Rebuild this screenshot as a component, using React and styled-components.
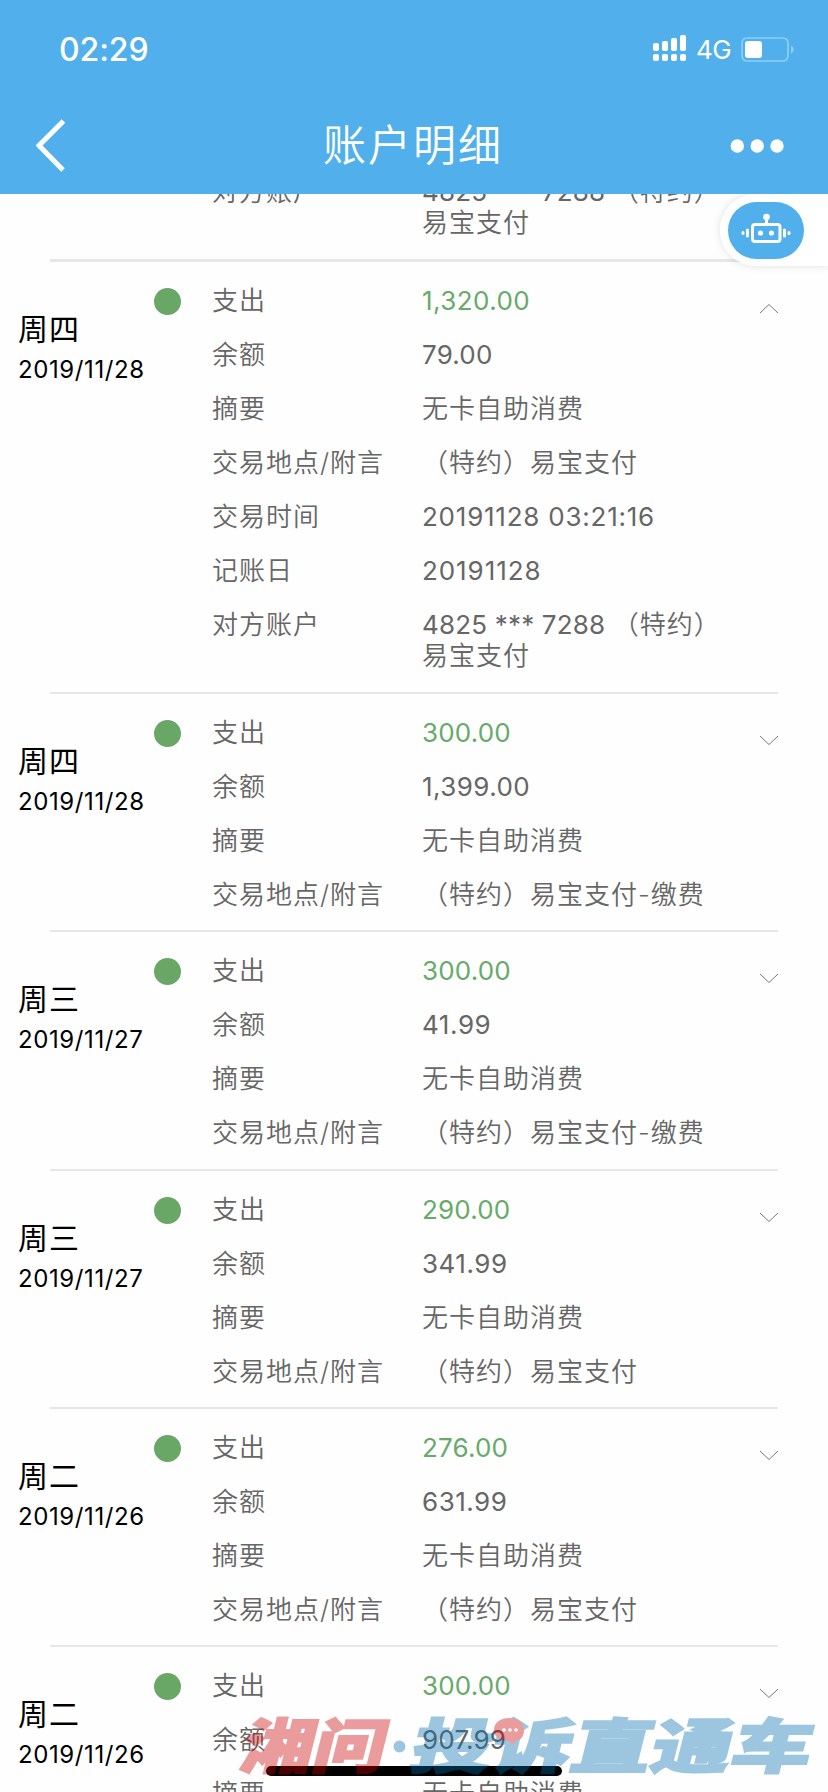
import React from 'react';
import styled, { createGlobalStyle } from 'styled-components';

const Global = createGlobalStyle`
  * { box-sizing: border-box; }
  body { margin: 0; background: #fefefe; overflow: hidden; }
`;

const Screen = styled.div`
  position: relative;
  width: 828px;
  height: 1792px;
  overflow: hidden;
  display: flex;
  flex-direction: column;
  background: #fefefe;
  font-family: Inter, 'Noto Sans CJK SC', sans-serif;
`;

const Header = styled.header`
  height: 194px;
  flex: none;
  background: #51b0ec;
  color: #fff;
`;

const StatusBar = styled.div`
  height: 100px;
  padding: 0 34px 0 59px;
  display: flex;
  align-items: center;
  justify-content: space-between;
`;

const Clock = styled.div`
  font-size: 32px;
  font-weight: 500;
  letter-spacing: -0.1px;
  line-height: 40px;
`;

const StatusIcons = styled.div`
  display: flex;
  align-items: center;
`;

const SignalIcon = styled.svg`
  margin-bottom: 3px;
`;

const Network = styled.span`
  width: 35px;
  margin: 0 10px 0 9px;
  font-size: 26px;
  line-height: 30px;
  letter-spacing: -0.5px;
  white-space: nowrap;
`;

const NavBar = styled.div`
  height: 92px;
  padding: 0 44px 0 36px;
  display: grid;
  grid-template-columns: 54px 1fr 54px;
  align-items: center;
`;

const Title = styled.h1`
  margin: 0;
  padding: 0 0 8px 6px;
  text-align: center;
  font-family: 'Noto Sans CJK SC', sans-serif;
  font-size: 43px;
  font-weight: 350;
  line-height: 60px;
  letter-spacing: 2px;
`;

const List = styled.main`
  flex: 1;
  min-height: 0;
  overflow: hidden;
`;

const Entry = styled.section`
  height: ${(p) => p.$height}px;
  margin-top: ${(p) => p.$shift || 0}px;
  display: grid;
  grid-template-columns: 154px 58px 1fr 50px;
  align-items: start;
`;

const Rule = styled.hr`
  margin: 0 50px;
  border: 0;
  height: ${(p) => p.$thick || 2}px;
  background: #e7e7e7;
`;

const DateCell = styled.div`
  padding: 47px 0 0 18px;
  color: #000;
  white-space: nowrap;
`;

const Weekday = styled.div`
  font-size: 30px;
  line-height: 40px;
  letter-spacing: 1px;
`;

const DateText = styled.div`
  font-size: 24px;
  line-height: 41px;
  letter-spacing: 0.6px;
`;

const Dot = styled.i`
  width: 27px;
  height: 27px;
  margin-top: 26px;
  border-radius: 50%;
  background: #69a767;
`;

const Rows = styled.dl`
  margin: 0;
  padding-top: 23px;
  display: flex;
  flex-direction: column;
  gap: 23px;
`;

const Row = styled.div`
  display: grid;
  grid-template-columns: 210px 1fr;
  font-size: 26px;
  line-height: 31px;
  letter-spacing: 1px;
  color: #666;
`;

const Label = styled.dt`
  font-weight: 350;
  white-space: nowrap;
`;

const Value = styled.dd`
  margin: 0;
  width: 300px;
  color: ${(p) => (p.$amount ? '#67aa69' : 'inherit')};
`;

const Line = styled.div`
  white-space: pre;
  font-weight: 350;
`;

const Digits = styled.span`
  font-weight: 400;
  letter-spacing: ${(p) => p.$tracking}px;
`;

const Toggle = styled.svg`
  margin: 42px 0 0 -18px;
  overflow: visible;
`;

const Assistant = styled.button`
  position: absolute;
  top: 194px;
  right: 0;
  width: 108px;
  height: 72px;
  padding: 0 0 0 8px;
  border: 0;
  border-radius: 36px 0 0 36px;
  background: rgba(255, 255, 255, 0.85);
  box-shadow: 0 0 8px rgba(0, 0, 0, 0.12);
  clip-path: inset(0 0 -12px -12px);
  display: flex;
  align-items: center;
`;

const Bubble = styled.span`
  width: 76px;
  height: 57px;
  border-radius: 28.5px;
  background: #51b0ec;
`;

const HomeBar = styled.div`
  position: absolute;
  left: 266px;
  top: 1766px;
  width: 296px;
  height: 10px;
  border-radius: 5px;
  background: #000;
`;

const Watermark = styled.svg`
  position: absolute;
  left: 0;
  bottom: 0;
  pointer-events: none;
`;

const MarkText = styled.text`
  font-family: 'Noto Sans CJK SC', sans-serif;
  font-size: 59px;
  font-weight: 900;
`;

const place = '交易地点/附言';
const detail = (amount, balance, where) => [
  ['支出', amount],
  ['余额', balance],
  ['摘要', '无卡自助消费'],
  [place, where],
];
const account = ['对方账户', '4825 *** 7288 （特约）', '易宝支付'];

const entries = [
  {
    day: '周四', date: '2019/11/28', height: 430, open: true,
    rows: [
      ...detail('1,320.00', '79.00', '（特约）易宝支付'),
      ['交易时间', '20191128 03:21:16'],
      ['记账日', '20191128'],
      account,
    ],
  },
  { day: '周四', date: '2019/11/28', height: 236, rows: detail('300.00', '1,399.00', '（特约）易宝支付-缴费') },
  { day: '周三', date: '2019/11/27', height: 236.5, rows: detail('300.00', '41.99', '（特约）易宝支付-缴费') },
  { day: '周三', date: '2019/11/27', height: 236, rows: detail('290.00', '341.99', '（特约）易宝支付') },
  { day: '周二', date: '2019/11/26', height: 236.5, rows: detail('276.00', '631.99', '（特约）易宝支付') },
  { day: '周二', date: '2019/11/26', height: 236, rows: detail('300.00', '907.99', '（特约）易宝支付') },
];

// The figure 1 is narrow in Inter, so runs with many of them get wider tracking.
const trackingOf = (run) => 0.18 + (2 * (run.split('1').length - 1)) / run.length;

function ValueLine({ text }) {
  const [, digits, rest] = text.match(/^([\d.,:* ]*)(.*)$/);
  return (
    <Line>
      {digits && <Digits $tracking={trackingOf(digits)}>{digits}</Digits>}
      {rest}
    </Line>
  );
}

function Detail({ row, amount }) {
  const [label, ...lines] = row;
  return (
    <Row>
      <Label>{label}</Label>
      <Value $amount={amount}>{lines.map((l) => <ValueLine key={l} text={l} />)}</Value>
    </Row>
  );
}

function Signal() {
  const tops = [8, 6, 3, 0];
  return (
    <SignalIcon width="34" height="27" fill="#fff">
      {tops.map((t, i) => (
        <g key={t}>
          <rect x={i * 9} y={t} width="6" height={16 - t} rx="2" />
          <rect x={i * 9} y="19" width="6" height="7" rx="2" />
        </g>
      ))}
    </SignalIcon>
  );
}

function Battery() {
  return (
    <svg width="53" height="26" fill="none">
      <rect x="1" y="1" width="46" height="23" rx="5" stroke="#8bcff5" strokeWidth="1.7" />
      <rect x="4" y="4" width="17" height="17" rx="3" fill="#fff" />
      <path d="M50 8.500c3.500 1.500 3.500 6.500 0 8z" fill="#8bcff5" />
    </svg>
  );
}

function Robot() {
  return (
    <svg width="76" height="57" fill="none" stroke="#fff" strokeWidth="3" strokeLinecap="round">
      <rect x="24.500" y="22.500" width="27.500" height="17" rx="2.500" />
      <path d="M38.500 21v-5M19.500 28v6M56.500 28v6" />
      <path d="M15 30.500v1M61 30.500v1" />
      <circle cx="38.500" cy="15" r="3.300" fill="#fff" stroke="none" />
      <circle cx="32.500" cy="31" r="2.600" fill="#fff" stroke="none" />
      <circle cx="43.500" cy="31" r="2.600" fill="#fff" stroke="none" />
    </svg>
  );
}

export default function App() {
  return (
    <Screen>
      <Global />
      <Header>
        <StatusBar>
          <Clock>02:29</Clock>
          <StatusIcons>
            <Signal />
            <Network>4G</Network>
            <Battery />
          </StatusIcons>
        </StatusBar>
        <NavBar>
          <svg width="30" height="54" fill="none" stroke="#fff" strokeWidth="5">
            <path d="M27.500 2L3 26.500L27 51" />
          </svg>
          <Title>账户明细</Title>
          <svg width="54" height="14" fill="#fff">
            <circle cx="7.300" cy="7" r="6.700" />
            <circle cx="27.200" cy="7" r="6.700" />
            <circle cx="47" cy="7" r="6.700" />
          </svg>
        </NavBar>
      </Header>
      <List>
        <Entry $height={106} $shift={-41}>
          <span />
          <span />
          <Rows><Detail row={account} /></Rows>
        </Entry>
        <Rule $thick={3} />
        {entries.map((e, n) => (
          <React.Fragment key={n}>
            <Entry $height={e.height}>
              <DateCell>
                <Weekday>{e.day}</Weekday>
                <DateText>{e.date}</DateText>
              </DateCell>
              <Dot />
              <Rows>
                {e.rows.map((r, i) => <Detail key={r[0]} row={r} amount={i === 0} />)}
              </Rows>
              <Toggle width="18" height="9" fill="none" stroke="#777" strokeWidth="1">
                <path d={e.open ? 'M0 9L9 0.500L18 9' : 'M0 0L9 8.500L18 0'} />
              </Toggle>
            </Entry>
            <Rule />
          </React.Fragment>
        ))}
      </List>
      <Assistant aria-label="assistant">
        <Bubble><Robot /></Bubble>
      </Assistant>
      <HomeBar />
      <Watermark width="828" height="92" viewBox="0 1700 828 92">
        <g opacity="0.38">
          <g fill="#cb0000" stroke="#cb0000" strokeWidth="2">
            <MarkText transform="translate(238 1768) skewX(-14)" textLength="144" lengthAdjust="spacingAndGlyphs">湘问</MarkText>
          </g>
          <g fill="#006eae" stroke="#006eae" strokeWidth="2">
            <circle cx="399.500" cy="1746.500" r="5" />
            <MarkText transform="translate(408 1768) skewX(-14)" textLength="400" lengthAdjust="spacingAndGlyphs">投诉直通车</MarkText>
          </g>
          <path d="M494 1730c0-16 30-16 30 0c0 7-4 11-9 11l-3 4l-3-4c-9 0-15-4-15-11z" fill="#cb0000" />
        </g>
        <g fill="#fff">
          <circle cx="504" cy="1730" r="1.800" />
          <circle cx="510" cy="1730" r="1.800" />
          <circle cx="516" cy="1730" r="1.800" />
        </g>
      </Watermark>
    </Screen>
  );
}
